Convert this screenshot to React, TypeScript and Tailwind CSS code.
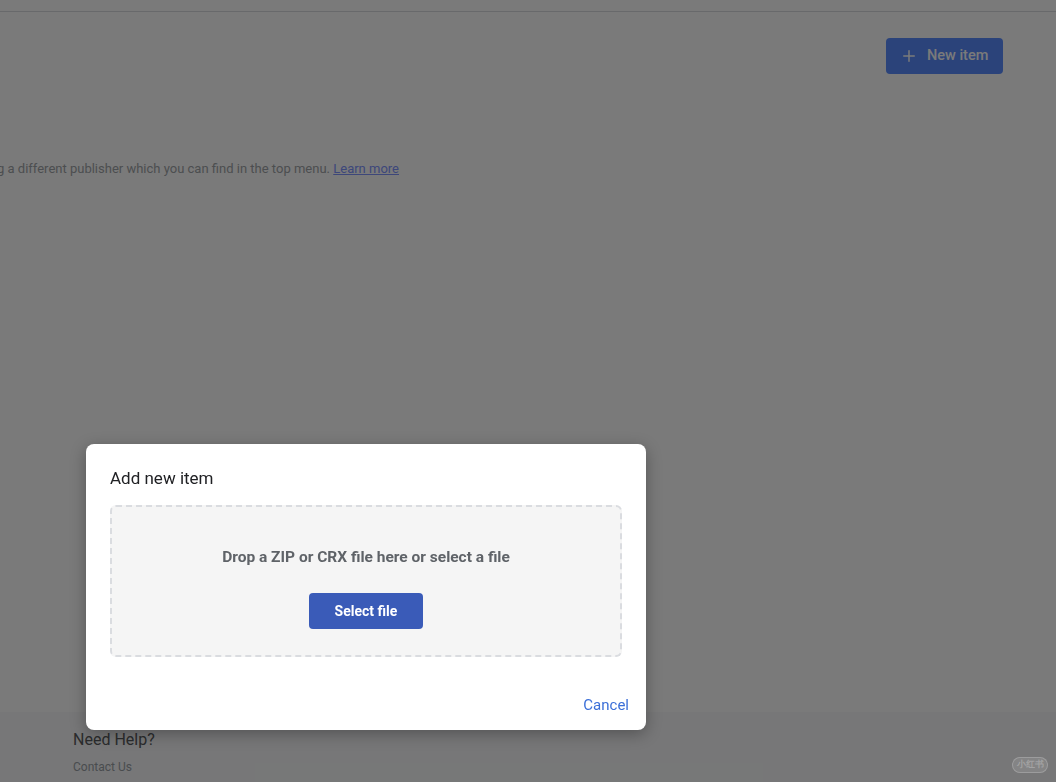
import { Plus } from "lucide-react";

const font = { fontFamily: "Roboto, 'Noto Sans', Arial, sans-serif" };

function Page() {
  return (
    <div className="flex h-[782px] flex-col overflow-hidden bg-white" style={font}>
      <div className="h-[12px] shrink-0 border-b border-[#dadce0]" />
      <main className="relative flex-1">
        <div className="flex justify-end pr-[53px] pt-[26px]">
          <button className="flex h-[36px] w-[117px] items-center gap-[9px] rounded-[4px] bg-[#5a8cff] pl-[14px] text-[14.5px] font-medium text-white">
            <Plus className="h-[18px] w-[18px]" strokeWidth={2} />
            New item
          </button>
        </div>
        <p className="-ml-[3px] mt-[85px] whitespace-nowrap text-[13px] text-[#a0a4a8]">
          g a different publisher which you can find in the top menu.{" "}
          <a className="text-[#7f95ff] underline">Learn more</a>
        </p>
      </main>
      <footer className="h-[70px] shrink-0 bg-[#f8f9fa] pl-[73px] pt-[17px]">
        <h4 className="text-[16px] leading-[22px] text-[#5a5c60]">Need Help?</h4>
        <p className="mt-[7px] text-[12px] text-[#9aa0a6]">Contact Us</p>
      </footer>
    </div>
  );
}

function Dialog() {
  return (
    <div
      className="fixed left-[86px] top-[444px] flex h-[286px] w-[560px] flex-col rounded-[8px] bg-white px-[24px] pt-[22px] shadow-[0_4px_16px_rgba(0,0,0,0.3)]"
      style={font}
    >
      <h2 className="text-[17px] leading-[24px] text-[#202124]">Add new item</h2>
      <div className="mt-[15px] flex h-[152px] flex-col items-center rounded-[6px] border-2 border-dashed border-[#dadce0] bg-[#f5f5f5] pt-[40px]">
        <p className="text-[15.5px] font-bold leading-[20px] text-[#5f6368]">
          Drop a ZIP or CRX file here or select a file
        </p>
        <button className="mt-[26px] h-[36px] w-[114px] rounded-[4px] bg-[#3a5bb8] text-[14px] font-bold text-white">
          Select file
        </button>
      </div>
      <div className="mt-auto flex justify-end pb-[14px]">
        <button className="-mr-[7px] text-[15px] text-[#3b6fd8]">Cancel</button>
      </div>
    </div>
  );
}

export default function App() {
  return (
    <div className="relative h-[782px] w-full overflow-hidden">
      <Page />
      <div className="absolute inset-0 bg-black/[0.52]" />
      <div className="absolute bottom-[9px] right-[8px] flex h-[16px] w-[36px] items-center justify-center rounded-full border border-white/20 bg-white/10 text-[9px] font-bold text-white/25" style={font}>
        小红书
      </div>
      <Dialog />
    </div>
  );
}
